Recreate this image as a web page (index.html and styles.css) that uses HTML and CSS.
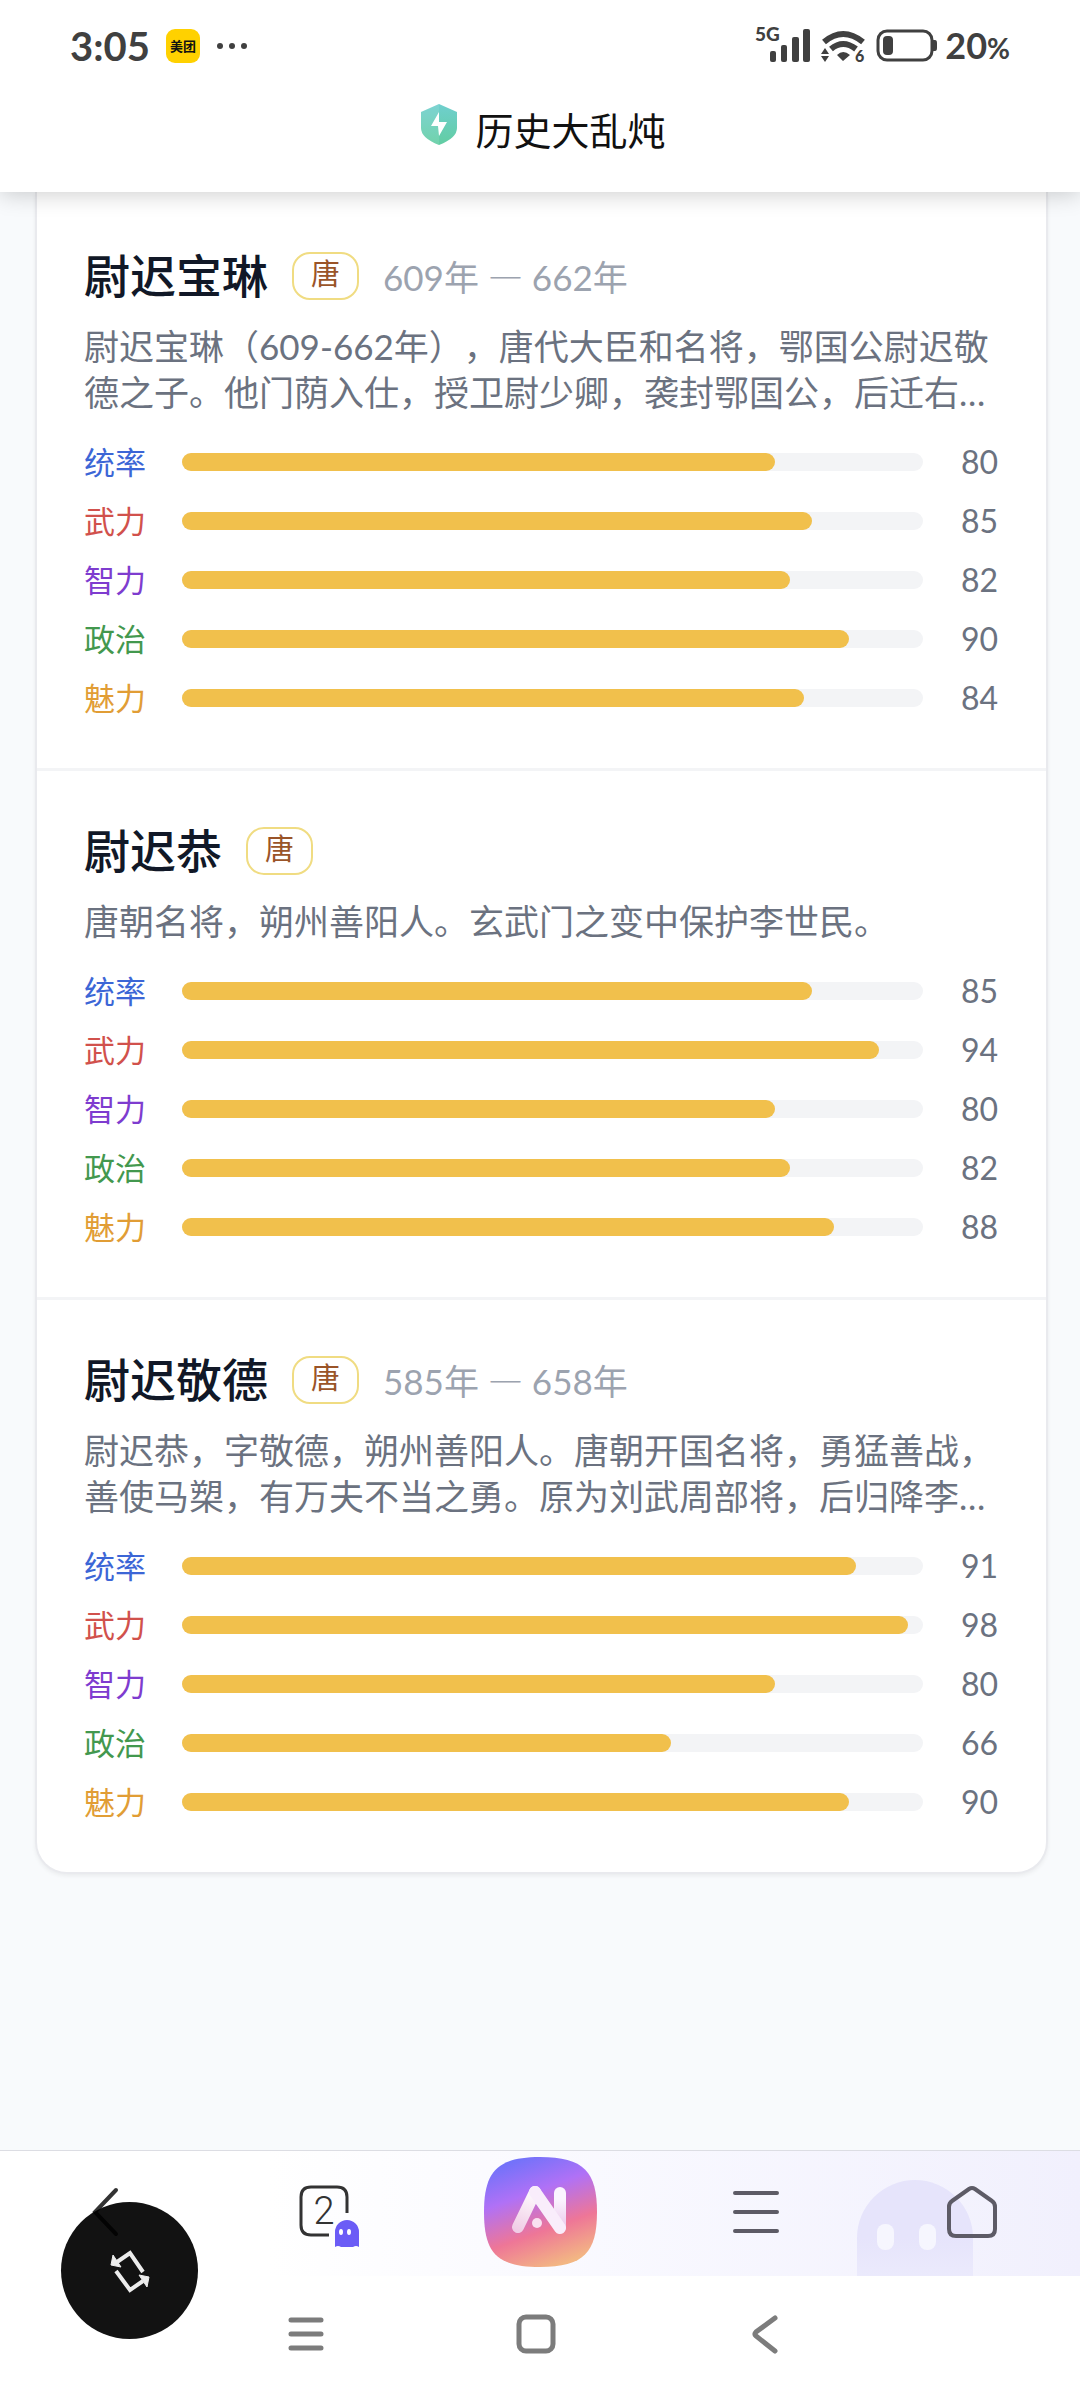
FILE: index.html
```html
<!DOCTYPE html>
<html lang="zh-CN">
<head>
<meta charset="utf-8">
<meta name="viewport" content="width=device-width, initial-scale=1">
<title>历史大乱炖</title>
<link rel="stylesheet" href="styles.css">
</head>
<body>
<header class="top">
  <div class="status">
    <div class="status-left">
      <span class="clock">3:05</span>
      <span class="app-badge">美团</span>
      <svg class="dots" width="32" height="8" viewBox="0 0 32 8" fill="#404040" aria-hidden="true"><circle cx="4" cy="4" r="3"/><circle cx="16" cy="4" r="3"/><circle cx="28" cy="4" r="3"/></svg>
    </div>
    <div class="status-right">
      <svg width="186" height="60" viewBox="752 16 186 60" fill="#404040" aria-hidden="true">
        <text x="756" y="41" class="net">5G</text>
        <rect x="771" y="51" width="6" height="11" rx="2"/><rect x="782" y="45" width="6" height="17" rx="2"/><rect x="793" y="37" width="7" height="25" rx="2"/><rect x="804" y="29" width="7" height="33" rx="2"/>
        <path d="M825 42Q844 26 864 42M832 49Q844 39 857 49" fill="none" stroke="#404040" stroke-width="6"/>
        <path d="M838 55Q844 49 851 55L844 61zM822 54L826 48L830 54zM822 56H830L826 62z"/>
        <text x="856" y="62" class="gen">6</text>
        <rect x="879" y="31" width="54" height="29" rx="9" fill="none" stroke="#404040" stroke-width="3"/>
        <rect x="884" y="36" width="10" height="19" rx="4"/><path d="M934 40h2q2 0 2 3v5q0 3-2 3h-2z"/>
      </svg>
      <span class="level">20<small>%</small></span>
    </div>
  </div>
  <div class="title-bar">
    <svg class="shield" width="36" height="42" viewBox="0 0 36 42" aria-hidden="true">
      <defs><linearGradient id="sh" x1="0" y1="0" x2="0" y2="1"><stop offset="0" stop-color="#6fcfce"/><stop offset="1" stop-color="#62cda2"/></linearGradient></defs>
      <path d="M18 1L36 9V25Q36 35 18 42Q0 35 0 25V9z" fill="url(#sh)"/><path d="M18 1V42Q0 35 0 25V9z" fill="#fff" opacity=".1"/>
      <path d="M18 9L10 23H17L18 33L26 19H18z" fill="#fff"/>
    </svg>
    <h1>历史大乱炖</h1>
  </div>
</header>

<main class="page">
  <section class="panel">
    <article class="person">
      <div class="head"><h2>尉迟宝琳</h2><span class="dynasty">唐</span><span class="years">609年 <span class="dash">—</span> 662年</span></div>
      <p class="bio">尉迟宝琳（609-662年），唐代大臣和名将，鄂国公尉迟敬德之子。他门荫入仕，授卫尉少卿，袭封鄂国公，后迁右…</p>
      <ul class="stats">
        <li><span class="lead">统率</span><div class="bar"><div class="fill" style="width:80%"></div></div><span class="num">80</span></li>
        <li><span class="force">武力</span><div class="bar"><div class="fill" style="width:85%"></div></div><span class="num">85</span></li>
        <li><span class="wit">智力</span><div class="bar"><div class="fill" style="width:82%"></div></div><span class="num">82</span></li>
        <li><span class="rule">政治</span><div class="bar"><div class="fill" style="width:90%"></div></div><span class="num">90</span></li>
        <li><span class="charm">魅力</span><div class="bar"><div class="fill" style="width:84%"></div></div><span class="num">84</span></li>
      </ul>
    </article>
    <article class="person">
      <div class="head"><h2>尉迟恭</h2><span class="dynasty">唐</span></div>
      <p class="bio">唐朝名将，朔州善阳人。玄武门之变中保护李世民。</p>
      <ul class="stats">
        <li><span class="lead">统率</span><div class="bar"><div class="fill" style="width:85%"></div></div><span class="num">85</span></li>
        <li><span class="force">武力</span><div class="bar"><div class="fill" style="width:94%"></div></div><span class="num">94</span></li>
        <li><span class="wit">智力</span><div class="bar"><div class="fill" style="width:80%"></div></div><span class="num">80</span></li>
        <li><span class="rule">政治</span><div class="bar"><div class="fill" style="width:82%"></div></div><span class="num">82</span></li>
        <li><span class="charm">魅力</span><div class="bar"><div class="fill" style="width:88%"></div></div><span class="num">88</span></li>
      </ul>
    </article>
    <article class="person">
      <div class="head"><h2>尉迟敬德</h2><span class="dynasty">唐</span><span class="years">585年 <span class="dash">—</span> 658年</span></div>
      <p class="bio">尉迟恭，字敬德，朔州善阳人。唐朝开国名将，勇猛善战，善使马槊，有万夫不当之勇。原为刘武周部将，后归降李…</p>
      <ul class="stats">
        <li><span class="lead">统率</span><div class="bar"><div class="fill" style="width:91%"></div></div><span class="num">91</span></li>
        <li><span class="force">武力</span><div class="bar"><div class="fill" style="width:98%"></div></div><span class="num">98</span></li>
        <li><span class="wit">智力</span><div class="bar"><div class="fill" style="width:80%"></div></div><span class="num">80</span></li>
        <li><span class="rule">政治</span><div class="bar"><div class="fill" style="width:66%"></div></div><span class="num">66</span></li>
        <li><span class="charm">魅力</span><div class="bar"><div class="fill" style="width:90%"></div></div><span class="num">90</span></li>
      </ul>
    </article>
  </section>
</main>

<footer class="bottom">
  <nav class="toolbar">
    <svg class="ghost-bg" width="118" height="96" viewBox="0 0 118 96" aria-hidden="true">
      <defs><linearGradient id="gb" x1="0" y1="0" x2="0" y2="1"><stop offset=".6" stop-color="#e6e4fb"/><stop offset="1" stop-color="#ebeafc"/></linearGradient></defs>
      <path d="M1 96V58A58 58 0 0 1 117 58V96z" fill="url(#gb)"/><rect x="21" y="44" width="17" height="26" rx="8" fill="#f6f6fe"/><rect x="63" y="44" width="17" height="26" rx="8" fill="#f6f6fe"/>
    </svg>
    <button type="button" aria-label="后退"><svg width="56" height="56" viewBox="80 2185 56 56" fill="none" stroke="#333" stroke-width="4" stroke-linecap="round"><path d="M116 2191L95 2213L116 2235"/></svg></button>
    <button type="button" aria-label="标签页"><svg width="78" height="70" viewBox="285 2178 78 70">
      <path d="M347 2214V2198Q347 2188 337 2188H311Q301 2188 301 2198V2226Q301 2236 311 2236H329" fill="none" stroke="#333" stroke-width="3"/>
      <text x="324" y="2225" text-anchor="middle" class="tab-count">2</text>
      <path d="M335 2248V2233A12 12 0 0 1 359 2233V2248Q356 2246 353 2248Q347 2250 341 2248Q338 2246 335 2248z" fill="#6b5cf6"/>
      <ellipse cx="341" cy="2233" rx="2" ry="3" fill="#fff"/><ellipse cx="349" cy="2233" rx="2" ry="3" fill="#fff"/>
    </svg></button>
    <button type="button" aria-label="AI"><svg width="113" height="110" viewBox="0 0 113 110">
      <defs>
        <linearGradient id="ai" x1=".25" y1="0" x2=".62" y2="1"><stop offset="0" stop-color="#6b72fa"/><stop offset=".34" stop-color="#b071f6"/><stop offset=".68" stop-color="#ee7697"/><stop offset="1" stop-color="#f3b783"/></linearGradient>
        <linearGradient id="leg" gradientUnits="userSpaceOnUse" x1="51" y1="32" x2="34" y2="74"><stop offset="0" stop-color="#fff"/><stop offset="1" stop-color="#f0cce6"/></linearGradient>
        <linearGradient id="post" gradientUnits="userSpaceOnUse" x1="76" y1="30" x2="76" y2="70"><stop offset=".3" stop-color="#fbf5ff"/><stop offset="1" stop-color="#eccbec"/></linearGradient>
      </defs>
      <path d="M56 0C100 0 113 15 113 55S100 110 56 110S0 95 0 55S13 0 56 0z" fill="url(#ai)"/>
      <g fill="none" stroke-width="12" stroke-linecap="round" stroke-linejoin="round"><path d="M76 36L76 70" stroke="url(#post)"/><path d="M34 70L51 35" stroke="url(#leg)"/><path d="M51 35L76 71" stroke="#f9edfb"/></g>
      <circle cx="53" cy="66" r="5" fill="#f9e0f0"/>
    </svg></button>
    <button type="button" aria-label="菜单"><svg width="48" height="48" viewBox="0 0 48 48" stroke="#5d5b66" stroke-width="4" stroke-linecap="round"><path d="M3 5H45M3 24H45M3 43H45"/></svg></button>
    <button type="button" aria-label="主页"><svg width="54" height="56" viewBox="945 2184 54 56" fill="none" stroke="#5d5b66" stroke-width="4" stroke-linejoin="round"><path d="M969 2189Q972 2187 975 2189L992 2201Q995 2203 995 2207V2229Q995 2236 988 2236H956Q949 2236 949 2229V2207Q949 2203 952 2201z"/></svg></button>
  </nav>
  <nav class="system">
    <button type="button" aria-label="最近任务"><svg width="40" height="40" viewBox="0 0 40 40" stroke="#7c7c7c" stroke-width="5" stroke-linecap="round"><path d="M5 6H35M5 20H35M5 34H35"/></svg></button>
    <button type="button" aria-label="桌面"><svg width="40" height="40" viewBox="0 0 40 40" fill="none" stroke="#7c7c7c" stroke-width="5"><rect x="3" y="3" width="34" height="34" rx="7"/></svg></button>
    <button type="button" aria-label="返回"><svg width="40" height="40" viewBox="0 0 40 40" fill="none" stroke="#7c7c7c" stroke-width="5" stroke-linecap="round"><path d="M29 4L10 18Q8 20 10 22L29 37"/></svg></button>
  </nav>
  <button type="button" class="rotate" aria-label="旋转屏幕"><svg width="137" height="137" viewBox="0 0 137 137" fill="none" stroke="#ececec" stroke-width="4">
    <path d="M82 70L69 51L56 60M55 69L69 88L82 79"/><path d="M52 53L50 63L60 65zM86 85L88 75L78 73z" fill="#ececec" stroke="#ececec" stroke-width="1"/>
  </svg></button>
</footer>
</body>
</html>
```
FILE: styles.css
```css
* { box-sizing: border-box; }
body {
  margin: 0;
  min-height: 100vh;
  display: flex;
  flex-direction: column;
  background: #f8fafc;
  font-family: Lato, "Noto Sans CJK SC", sans-serif;
  text-spacing-trim: space-all;
}
h1, h2, p, ul { margin: 0; padding: 0; }
button { border: 0; padding: 0; background: none; cursor: pointer; }
svg { display: block; }

/* Header */
.top { position: relative; z-index: 1; background: #fff; box-shadow: 0 2px 22px rgba(0, 0, 0, .2); }
.status { display: flex; justify-content: space-between; align-items: center; height: 92px; padding: 0 70px; color: #404040; }
.status-left, .status-right { display: flex; align-items: center; }
.clock { font-size: 40px; font-weight: 700; line-height: 40px; }
.app-badge {
  width: 34px; height: 34px; margin: 0 16px; border-radius: 9px; background: #ffd100; color: #111;
  font-size: 13px; font-weight: 700; line-height: 34px; text-align: center;
}
.status-right { gap: 8px; }
.net { font-size: 19px; font-weight: 900; }
.gen { font-size: 16px; font-weight: 900; }
.level { font-size: 36px; font-weight: 700; line-height: 40px; }
.level small { font-size: 28px; }
.title-bar { display: flex; justify-content: center; align-items: flex-start; gap: 18px; height: 100px; padding: 11px 0 0 7px; }
.title-bar h1 { font-size: 38px; font-weight: 400; line-height: 54px; color: #111; }

/* People list */
.page { flex: 1; padding: 0 32px 48px 35px; }
.panel {
  padding-top: 4px; background: #fff; border: 2px solid #e9eaee; border-top: 0;
  border-radius: 0 0 32px 32px; box-shadow: 0 2px 4px rgba(0, 0, 0, .06);
}
.person { padding: 48px 48px 48px 47px; border-bottom: 3px solid #f3f4f6; }
.person:last-child { border-bottom: 0; }
.head { display: flex; align-items: center; gap: 24px; height: 64px; }
.head h2 { font-size: 46px; font-weight: 500; line-height: 64px; color: #111827; }
.dynasty {
  width: 67px; height: 48px; border: 2px solid #f0dc82; border-radius: 18px;
  color: #9a5428; font-size: 29px; line-height: 40px; text-align: center;
}
.years { color: #9ca3af; font-size: 35px; line-height: 46px; }
.dash { font-family: "Noto Sans CJK SC", sans-serif; }
.bio { margin: 15px 0 25px; color: #6b7280; font-size: 35px; line-height: 46px; }
.stats { display: grid; gap: 15px; list-style: none; }
.stats li { display: grid; grid-template-columns: 98px 1fr 75px; align-items: center; font-size: 31px; line-height: 44px; }
.bar { height: 18px; border-radius: 9px; background: #f3f4f6; }
.fill { height: 18px; border-radius: 9px; background: #f1c04c; }
.num { color: #6b7280; font-size: 32px; text-align: right; }
.lead { color: #3c66d6; }
.force { color: #d1514c; }
.wit { color: #7e3ccf; }
.rule { color: #43984e; }
.charm { color: #e19d35; }

/* Bottom bars */
.bottom { position: relative; background: #fff; }
.toolbar {
  position: relative; display: grid; grid-template-columns: repeat(5, 1fr); align-items: center;
  height: 126px; padding-bottom: 3px; border-top: 1px solid #dcdde3;
  background: linear-gradient(90deg, #fff 25%, #fafaff 50%, #f1f0fd);
}
.toolbar button { position: relative; display: flex; justify-content: center; align-items: center; }
.ghost-bg { position: absolute; right: 106px; bottom: 0; }
.tab-count { font-size: 38px; fill: #333; font-family: Roboto, sans-serif; font-weight: 300; }
.system { display: flex; justify-content: center; gap: 190px; height: 124px; padding: 38px 9px 0 0; align-items: flex-start; }
.rotate { position: absolute; left: 61px; top: 52px; width: 137px; height: 137px; border-radius: 50%; background: rgba(0, 0, 0, .93); }
```
